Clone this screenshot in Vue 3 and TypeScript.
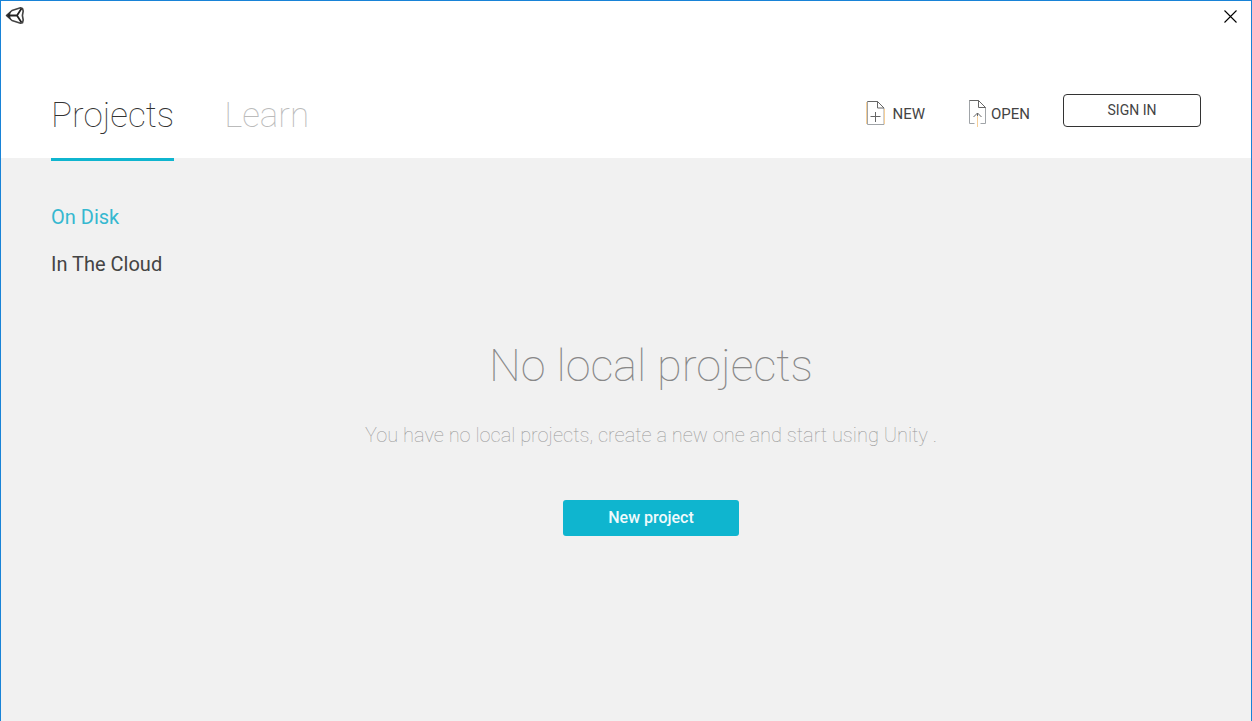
<script setup lang="ts">
import { ref } from 'vue'

const tabs = ['Projects', 'Learn']
const sources = ['On Disk', 'In The Cloud']
const activeTab = ref('Projects')
const activeSource = ref('On Disk')
</script>

<template>
  <div class="window">
    <header class="top">
      <div class="titlebar">
        <svg class="logo" viewBox="0 0 20 20" aria-hidden="true">
          <path d="M1.5 9.5 L7 4.5 L15.5 1.8 L17.5 2.5 L18.2 5 L17.4 9.5 L18.2 14 L17.5 16.8 L15.5 17.2 L7 14.5 Z" fill="none" stroke="#444" stroke-width="1.6" stroke-linejoin="round" />
          <path d="M1 9.5 L6 5 L5 9.5 L6 14 Z" fill="#333" />
          <path d="M3 9.5 H12 M12 9.5 L16.5 2.6 M12 9.5 L16.5 16.4" fill="none" stroke="#222" stroke-width="1.8" />
        </svg>
        <button class="close" type="button" aria-label="Close">
          <svg viewBox="0 0 13 13" aria-hidden="true">
            <path d="M0.5 0.5 L12.5 12.5 M12.5 0.5 L0.5 12.5" stroke="#000" stroke-width="1.1" />
          </svg>
        </button>
      </div>
      <div class="bar">
        <nav class="tabs">
          <button
            v-for="tab in tabs"
            :key="tab"
            type="button"
            class="tab"
            :class="{ active: tab === activeTab }"
            @click="activeTab = tab"
          >{{ tab }}</button>
        </nav>
        <div class="actions">
          <button class="action new" type="button">
            <svg viewBox="0 0 20 28" aria-hidden="true">
              <path d="M2.5 1.5 H12.5 L19 8 V24.5 H2.5 Z" />
              <path class="warm" d="M1.5 2 V24 M19.5 9 V24" />
              <path class="dark" d="M2.5 1.5 H12.5 L19 8 H12.5 V1.5" />
              <path class="dark" d="M10.5 12 V22 M5.5 16.5 H15.5" />
            </svg>
            <span>NEW</span>
          </button>
          <button class="action open" type="button">
            <svg viewBox="0 0 20 28" aria-hidden="true">
              <path d="M7.5 23.5 H2.5 V0.5 H11.5 L18.5 7.5 V23.5 H13.5" />
              <path class="dark" d="M2.5 0.5 H11.5 L18.5 7.5 H11.5 V0.5" />
              <path class="dark" d="M10.5 18 V13 M6.5 17 L10.5 13 L14.5 17" />
              <path class="warm" d="M10.5 27 V16" />
            </svg>
            <span>OPEN</span>
          </button>
          <button class="signin" type="button">SIGN IN</button>
        </div>
      </div>
    </header>
    <div class="body">
      <nav class="sources">
        <button
          v-for="source in sources"
          :key="source"
          type="button"
          class="source"
          :class="{ active: source === activeSource }"
          @click="activeSource = source"
        >{{ source }}</button>
      </nav>
      <main class="empty">
        <h1>No local projects</h1>
        <p>You have no local projects, create a new one and start using Unity .</p>
        <button class="create" type="button">New project</button>
      </main>
    </div>
  </div>
</template>

<style>
body {
  margin: 0;
}
</style>

<style scoped>
.window {
  box-sizing: border-box;
  min-height: 100vh;
  display: flex;
  flex-direction: column;
  border: 1px solid #1883d7;
  border-bottom: 0;
  background: #f1f1f1;
  font-family: Roboto, "Liberation Sans", sans-serif;
  color: #444;
}
button {
  font: inherit;
  color: inherit;
  background: none;
  border: 0;
  padding: 0;
  margin: 0;
  cursor: pointer;
}
svg {
  display: block;
}
.top {
  background: #fff;
}
.titlebar {
  display: flex;
  justify-content: space-between;
  align-items: center;
  height: 30px;
  padding: 0 14px 0 4px;
}
.logo {
  width: 20px;
  height: 20px;
}
.close svg {
  width: 13px;
  height: 13px;
}
.bar {
  display: flex;
  justify-content: space-between;
  align-items: flex-start;
  height: 64px;
  padding: 63px 50px 0;
}
.tabs {
  display: flex;
  gap: 50px;
}
.tab {
  height: 67px;
  padding-bottom: 20px;
  box-sizing: border-box;
  border-bottom: 3px solid transparent;
  font-size: 35px;
  line-height: 44px;
  font-weight: 100;
  color: #bbb;
}
.tab.active {
  color: #333;
  border-bottom-color: #0fb5cf;
}
.actions {
  display: flex;
  align-items: flex-start;
}
.action {
  display: flex;
  align-items: center;
  font-size: 15px;
  line-height: 20px;
  height: 39px;
}
.action svg {
  width: 20px;
  height: 28px;
  fill: none;
  stroke: #a0a4a8;
  stroke-width: 1;
}
.action .dark {
  stroke: #666;
}
.action .warm {
  stroke: #f6cf98;
}
.new {
  gap: 7px;
  margin-right: 42px;
}
.open {
  gap: 4px;
  margin-right: 33px;
}
.signin {
  box-sizing: border-box;
  width: 138px;
  height: 33px;
  border: 1px solid #333;
  border-radius: 4px;
  font-size: 14px;
  line-height: 31px;
}
.body {
  flex: 1;
  padding: 46px 0 40px 50px;
}
.sources {
  display: flex;
  flex-direction: column;
  align-items: flex-start;
  gap: 20px;
}
.source {
  font-size: 20px;
  line-height: 27px;
}
.source.active {
  color: #35b8d0;
}
.empty {
  display: flex;
  flex-direction: column;
  align-items: center;
  padding-top: 60px;
}
h1 {
  margin: 0;
  font-size: 45px;
  line-height: 56px;
  font-weight: 100;
  color: #888;
}
p {
  margin: 28px 0 0;
  font-size: 20px;
  line-height: 26px;
  font-weight: 100;
  color: #999;
}
.create {
  box-sizing: border-box;
  width: 176px;
  height: 36px;
  margin-top: 52px;
  padding-bottom: 2px;
  border-radius: 3px;
  background: #0fb5cf;
  color: #f0fafc;
  font-size: 16px;
  font-weight: 500;
}
</style>
